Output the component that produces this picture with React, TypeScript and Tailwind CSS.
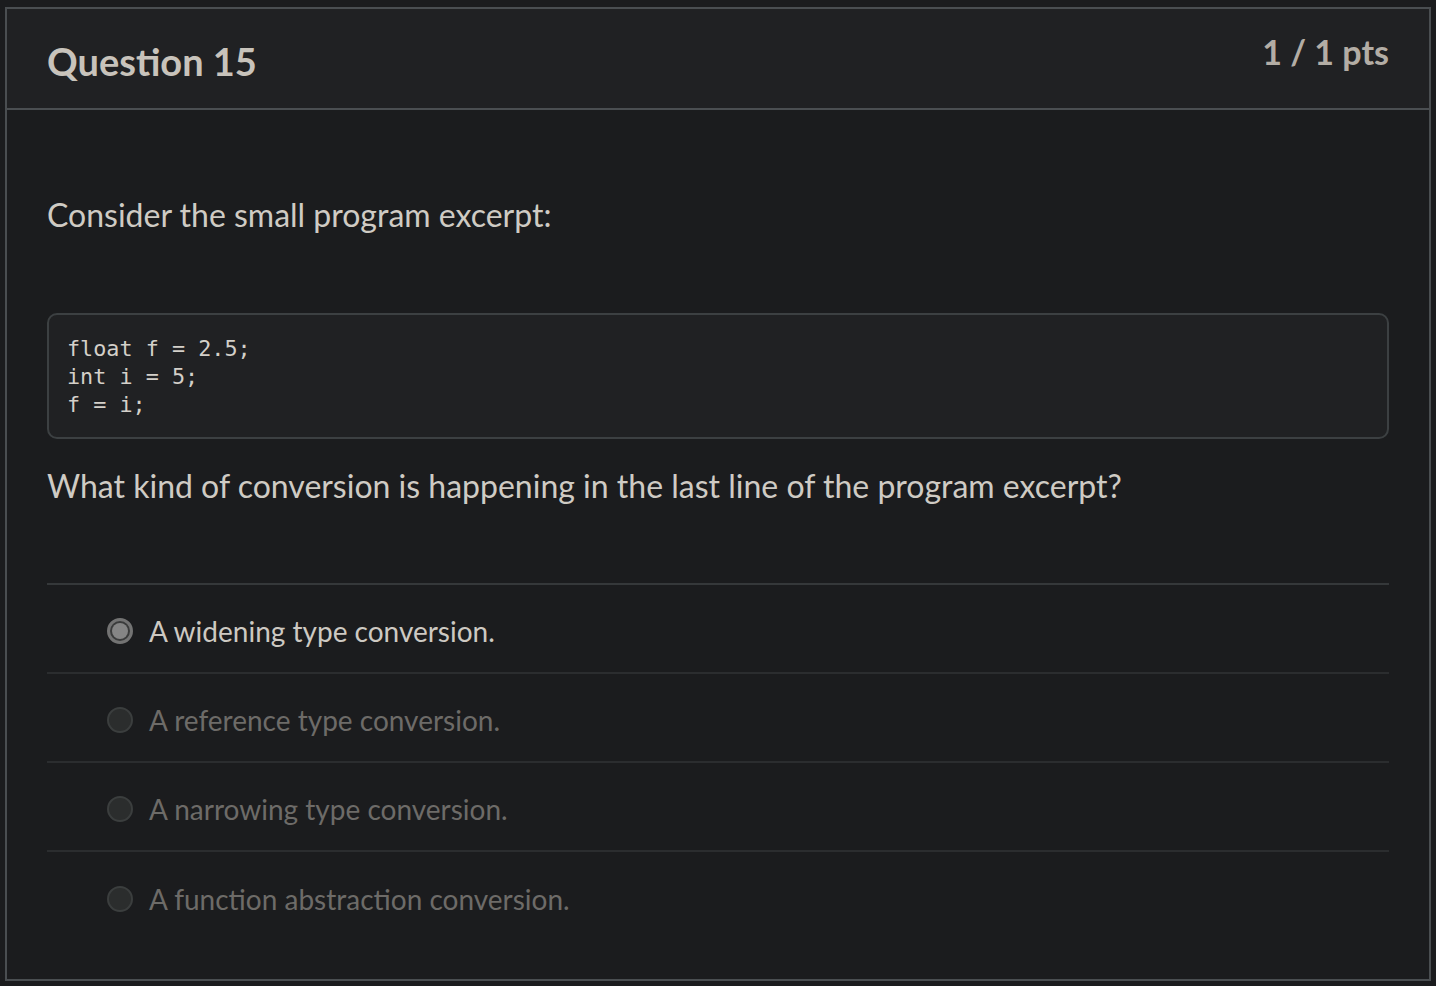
const options = [
  { label: "A widening type conversion.", selected: true },
  { label: "A reference type conversion.", selected: false },
  { label: "A narrowing type conversion.", selected: false },
  { label: "A function abstraction conversion.", selected: false },
];

function Radio({ selected }: { selected: boolean }) {
  if (selected) {
    return (
      <span className="flex h-[26px] w-[26px] shrink-0 items-center justify-center rounded-full border-[3px] border-[#737373] bg-[#3a3b3b]">
        <span className="h-[16px] w-[16px] rounded-full bg-[#858585]" />
      </span>
    );
  }
  return <span className="h-[26px] w-[26px] shrink-0 rounded-full border-2 border-[#3b3e3e] bg-[#2b2d2d]" />;
}

export default function App() {
  return (
    <div className="min-h-[986px] bg-[#1b1c1e] pl-[5px] pr-[5px] pt-[7px] font-['Lato',sans-serif]">
      <div className="h-[974px] border-2 border-[#4a4e51] bg-[#1b1c1e]">
        <div className="flex h-[101px] items-start justify-between border-b-2 border-[#4a4e51] bg-[#202123] px-[40px]">
          <h2 className="mt-[29px] text-[38px] font-bold leading-[46px] text-[#c8c3bb]">Question 15</h2>
          <span className="mt-[23px] text-[34px] font-bold leading-[40px] text-[#b3ada5]">1 / 1 pts</span>
        </div>

        <div className="px-[40px]">
          <p className="mt-[83px] text-[32px] leading-[44px] text-[#cfcbc4]">Consider the small program excerpt:</p>

          <pre className="mt-[76px] rounded-[10px] border-2 border-[#3c4042] bg-[#202123] px-[18px] pb-[18px] pt-[20px] font-['DejaVu_Sans_Mono',monospace] text-[21.8px] leading-[28px] text-[#d4d0c9]">
{`float f = 2.5;
int i = 5;
f = i;`}
          </pre>

          <p className="mt-[25px] text-[32px] leading-[44px] text-[#cfcbc4]">
            What kind of conversion is happening in the last line of the program excerpt?
          </p>

          <div className="mt-[75px] border-t-2 border-[#35383a]">
            {options.map((o, i) => (
              <div
                key={o.label}
                className={`flex h-[89px] items-center gap-[16px] pl-[60px] pt-[4px] ${i < options.length - 1 ? "border-b-2 border-[#2b2d2f]" : ""}`}
              >
                <Radio selected={o.selected} />
                <span className={`text-[28px] leading-[36px] ${o.selected ? "text-[#cdc9c2]" : "text-[#6d6b68]"}`}>
                  {o.label}
                </span>
              </div>
            ))}
          </div>
        </div>
      </div>
    </div>
  );
}
